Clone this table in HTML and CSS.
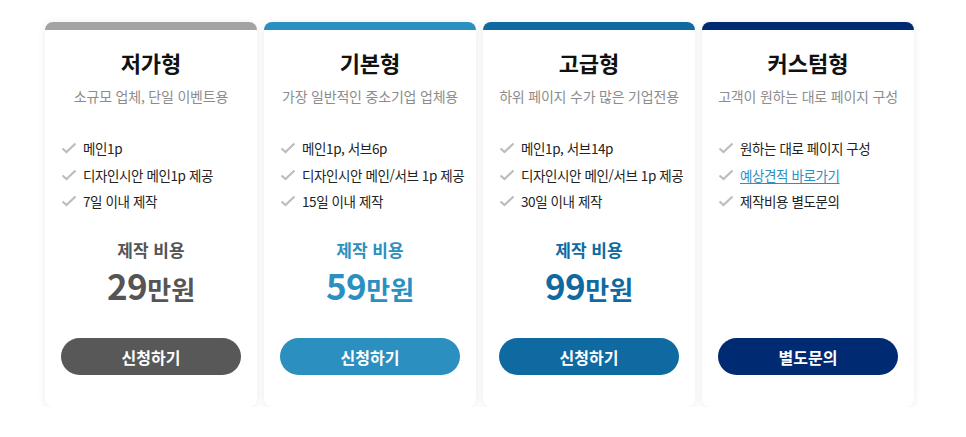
FILE: index.html
```html
<!DOCTYPE html>
<html lang="ko">
<head>
<meta charset="utf-8">
<link rel="stylesheet" href="styles.css">
</head>
<body>
<div class="plans">
  <div class="card gray">
    <div class="bar"></div>
    <h2 class="title">저가형</h2>
    <p class="sub">소규모 업체, 단일 이벤트용</p>
    <ul class="list">
      <li><svg class="chk" viewBox="0 0 16 12"><path d="M1.5 6.5 L5.5 10 L14.5 1.5"/></svg>메인1p</li>
      <li><svg class="chk" viewBox="0 0 16 12"><path d="M1.5 6.5 L5.5 10 L14.5 1.5"/></svg>디자인시안 메인1p 제공</li>
      <li><svg class="chk" viewBox="0 0 16 12"><path d="M1.5 6.5 L5.5 10 L14.5 1.5"/></svg>7일 이내 제작</li>
    </ul>
    <div class="price">
      <div class="plabel">제작 비용</div>
      <div class="pval"><span class="num">29</span><span class="unit">만원</span></div>
    </div>
    <a class="btn">신청하기</a>
  </div>
  <div class="card blue">
    <div class="bar"></div>
    <h2 class="title">기본형</h2>
    <p class="sub">가장 일반적인 중소기업 업체용</p>
    <ul class="list">
      <li><svg class="chk" viewBox="0 0 16 12"><path d="M1.5 6.5 L5.5 10 L14.5 1.5"/></svg>메인1p, 서브6p</li>
      <li><svg class="chk" viewBox="0 0 16 12"><path d="M1.5 6.5 L5.5 10 L14.5 1.5"/></svg>디자인시안 메인/서브 1p 제공</li>
      <li><svg class="chk" viewBox="0 0 16 12"><path d="M1.5 6.5 L5.5 10 L14.5 1.5"/></svg>15일 이내 제작</li>
    </ul>
    <div class="price">
      <div class="plabel">제작 비용</div>
      <div class="pval"><span class="num">59</span><span class="unit">만원</span></div>
    </div>
    <a class="btn">신청하기</a>
  </div>
  <div class="card dblue">
    <div class="bar"></div>
    <h2 class="title">고급형</h2>
    <p class="sub">하위 페이지 수가 많은 기업전용</p>
    <ul class="list">
      <li><svg class="chk" viewBox="0 0 16 12"><path d="M1.5 6.5 L5.5 10 L14.5 1.5"/></svg>메인1p, 서브14p</li>
      <li><svg class="chk" viewBox="0 0 16 12"><path d="M1.5 6.5 L5.5 10 L14.5 1.5"/></svg>디자인시안 메인/서브 1p 제공</li>
      <li><svg class="chk" viewBox="0 0 16 12"><path d="M1.5 6.5 L5.5 10 L14.5 1.5"/></svg>30일 이내 제작</li>
    </ul>
    <div class="price">
      <div class="plabel">제작 비용</div>
      <div class="pval"><span class="num">99</span><span class="unit">만원</span></div>
    </div>
    <a class="btn">신청하기</a>
  </div>
  <div class="card navy">
    <div class="bar"></div>
    <h2 class="title">커스텀형</h2>
    <p class="sub">고객이 원하는 대로 페이지 구성</p>
    <ul class="list">
      <li><svg class="chk" viewBox="0 0 16 12"><path d="M1.5 6.5 L5.5 10 L14.5 1.5"/></svg>원하는 대로 페이지 구성</li>
      <li><svg class="chk" viewBox="0 0 16 12"><path d="M1.5 6.5 L5.5 10 L14.5 1.5"/></svg><a class="link">예상견적 바로가기</a></li>
      <li><svg class="chk" viewBox="0 0 16 12"><path d="M1.5 6.5 L5.5 10 L14.5 1.5"/></svg>제작비용 별도문의</li>
    </ul>
    <div class="price"></div>
    <a class="btn">별도문의</a>
  </div>
</div>
</body>
</html>
```
FILE: styles.css
```css
* { box-sizing: border-box; }
html, body { margin: 0; padding: 0; background: #fff; }
body {
  font-family: "Noto Sans CJK KR", "Noto Sans", sans-serif;
  color: #222;
}
.plans {
  display: flex;
  gap: 7px;
  padding: 22px 0 0 45px;
}
.card {
  width: 212px;
  height: 385px;
  background: #fff;
  border-radius: 8px;
  box-shadow: 0 1px 8px rgba(0,0,0,0.08);
  overflow: hidden;
  display: flex;
  flex-direction: column;
  padding: 0 16px 32px;
}
.bar {
  height: 8px;
  margin: 0 -16px;
}
.title {
  margin: 16px 0 0;
  font-size: 22px;
  font-weight: 700;
  line-height: 32px;
  text-align: center;
  color: #111;
}
.sub {
  margin: 7px -16px 0;
  font-size: 14px;
  line-height: 22px;
  text-align: center;
  color: #8c8c8c;
  white-space: nowrap;
  letter-spacing: -0.2px;
}
.list {
  list-style: none;
  margin: 28px 0 0;
  padding: 0;
}
.list li {
  display: flex;
  align-items: center;
  font-size: 13.5px;
  line-height: 26.5px;
  color: #222;
  white-space: nowrap;
  letter-spacing: -0.4px;
}
.chk {
  width: 16px;
  height: 12px;
  margin-right: 6px;
  flex: none;
  fill: none;
  stroke: #bdbdbd;
  stroke-width: 2.2;
}
.link {
  color: #2b90c0;
  text-decoration: underline;
  text-underline-offset: 2px;
}
.price {
  margin-top: 23px;
  text-align: center;
  height: 70px;
}
.plabel {
  font-size: 17px;
  font-weight: 700;
  line-height: 24px;
}
.pval {
  line-height: 46px;
  font-weight: 700;
}
.num { font-size: 35px; letter-spacing: -0.5px; }
.unit { font-size: 26px; }
.btn {
  margin-top: auto;
  display: flex;
  align-items: center;
  justify-content: center;
  height: 37px;
  border-radius: 19px;
  color: #fff;
  font-size: 16px;
  font-weight: 700;
}
.gray .bar { background: #a3a3a3; }
.gray .btn { background: #585858; }
.gray .price { color: #555; }
.blue .bar, .blue .btn { background: #2b90c0; }
.blue .price { color: #2b90c0; }
.dblue .bar, .dblue .btn { background: #0e6aa0; }
.dblue .price { color: #0e6aa0; }
.navy .bar, .navy .btn { background: #002a72; }
```
